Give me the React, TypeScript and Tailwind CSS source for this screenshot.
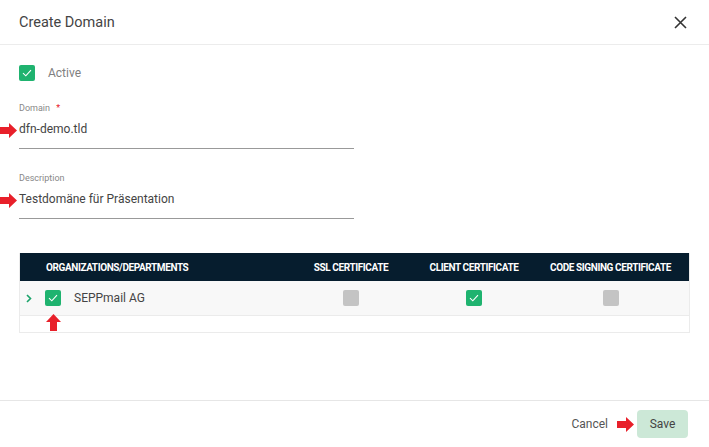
import React from "react";

const RightArrow = ({ className }: { className?: string }) => (
  <svg className={className} width="17" height="15" viewBox="0 0 17 15">
    <polygon points="0,4 9,4 9,0 17,7.5 9,15 9,11 0,11" fill="#e8202a" />
  </svg>
);

const UpArrow = ({ className }: { className?: string }) => (
  <svg className={className} width="15" height="17" viewBox="0 0 15 17">
    <polygon points="4,17 4,8 0,8 7.5,0 15,8 11,8 11,17" fill="#e8202a" />
  </svg>
);

const Check = ({ on }: { on: boolean }) =>
  on ? (
    <div className="w-[16px] h-[16px] rounded-[2px] bg-[#1fb36f] flex items-center justify-center">
      <svg width="10" height="8" viewBox="0 0 10 8">
        <polyline points="1,4.2 3.8,6.8 9,1.2" fill="none" stroke="white" strokeWidth="1.1" />
      </svg>
    </div>
  ) : (
    <div className="w-[16px] h-[16px] rounded-[2px] bg-[#c4c4c4]" />
  );

export default function App() {
  return (
    <div
      className="w-[709px] h-[447px] bg-white flex flex-col text-[#333]"
      style={{ fontFamily: "Roboto, 'Noto Sans', sans-serif" }}
    >
      <div className="h-[45px] flex items-center justify-between pl-[19px] pr-[22px] border-b border-[#ececec] shrink-0">
        <span className="text-[14.5px] text-[#444] pt-[1px]">Create Domain</span>
        <svg width="13" height="13" viewBox="0 0 13 13">
          <path d="M1 1 L12 12 M12 1 L1 12" stroke="#333" strokeWidth="1.6" />
        </svg>
      </div>

      <div className="flex-1 flex flex-col px-[19px]">
        <div className="mt-[20px] flex items-center gap-[13px] h-[16px]">
          <Check on={true} />
          <span className="text-[12px] text-[#808080]">Active</span>
        </div>

        <div className="mt-[21px] w-[335px] relative">
          <div className="text-[9px] leading-[12px] text-[#888]">
            Domain <span className="text-[#e8202a] ml-[4px]">*</span>
          </div>
          <div className="mt-[5px] text-[12px] leading-[20px] pb-[9px] border-b border-[#999] text-[#444]">
            dfn-demo.tld
          </div>
          <RightArrow className="absolute left-[-19px] top-[21px]" />
        </div>

        <div className="mt-[23px] w-[335px] relative">
          <div className="text-[9px] leading-[12px] text-[#888]">Description</div>
          <div className="mt-[5px] text-[12px] leading-[20px] pb-[9px] border-b border-[#999] text-[#444]">
            Testdomäne für Präsentation
          </div>
          <RightArrow className="absolute left-[-19px] top-[21px]" />
        </div>

        <div className="mt-[34px] w-[671px] border-b border-x border-[#ebebeb]">
          <div className="h-[28px] bg-[#061d2e] grid grid-cols-[266px_130px_116px_157px] items-center text-white text-[10px] font-bold tracking-[-0.4px]">
            <span className="pl-[26px]">ORGANIZATIONS/DEPARTMENTS</span>
            <span className="text-center">SSL CERTIFICATE</span>
            <span className="text-center">CLIENT CERTIFICATE</span>
            <span className="text-center">CODE SIGNING CERTIFICATE</span>
          </div>
          <div className="h-[35px] bg-[#f8f8f8] border-b border-[#ebebeb] grid grid-cols-[266px_130px_116px_157px] items-center">
            <div className="flex items-center relative">
              <svg className="ml-[6px]" width="6" height="9" viewBox="0 0 6 9">
                <polyline points="1,1 4.5,4.5 1,8" fill="none" stroke="#1aa36a" strokeWidth="1.6" />
              </svg>
              <div className="ml-[13px]">
                <Check on={true} />
              </div>
              <span className="ml-[13px] text-[12px] text-[#444]">SEPPmail AG</span>
              <UpArrow className="absolute left-[26px] top-[25px]" />
            </div>
            <div className="flex justify-center"><Check on={false} /></div>
            <div className="flex justify-center"><Check on={true} /></div>
            <div className="flex justify-center"><Check on={false} /></div>
          </div>
          <div className="h-[16px]" />
        </div>
      </div>

      <div className="h-[47px] border-t border-[#e6e6e6] flex items-center justify-end pr-[21px] shrink-0">
        <span className="text-[12px] text-[#555]">Cancel</span>
        <RightArrow className="ml-[9px]" />
        <button className="ml-[3px] w-[51px] h-[28px] rounded-[4px] bg-[#cce8d7] text-[12px] text-[#444]">
          Save
        </button>
      </div>
    </div>
  );
}
